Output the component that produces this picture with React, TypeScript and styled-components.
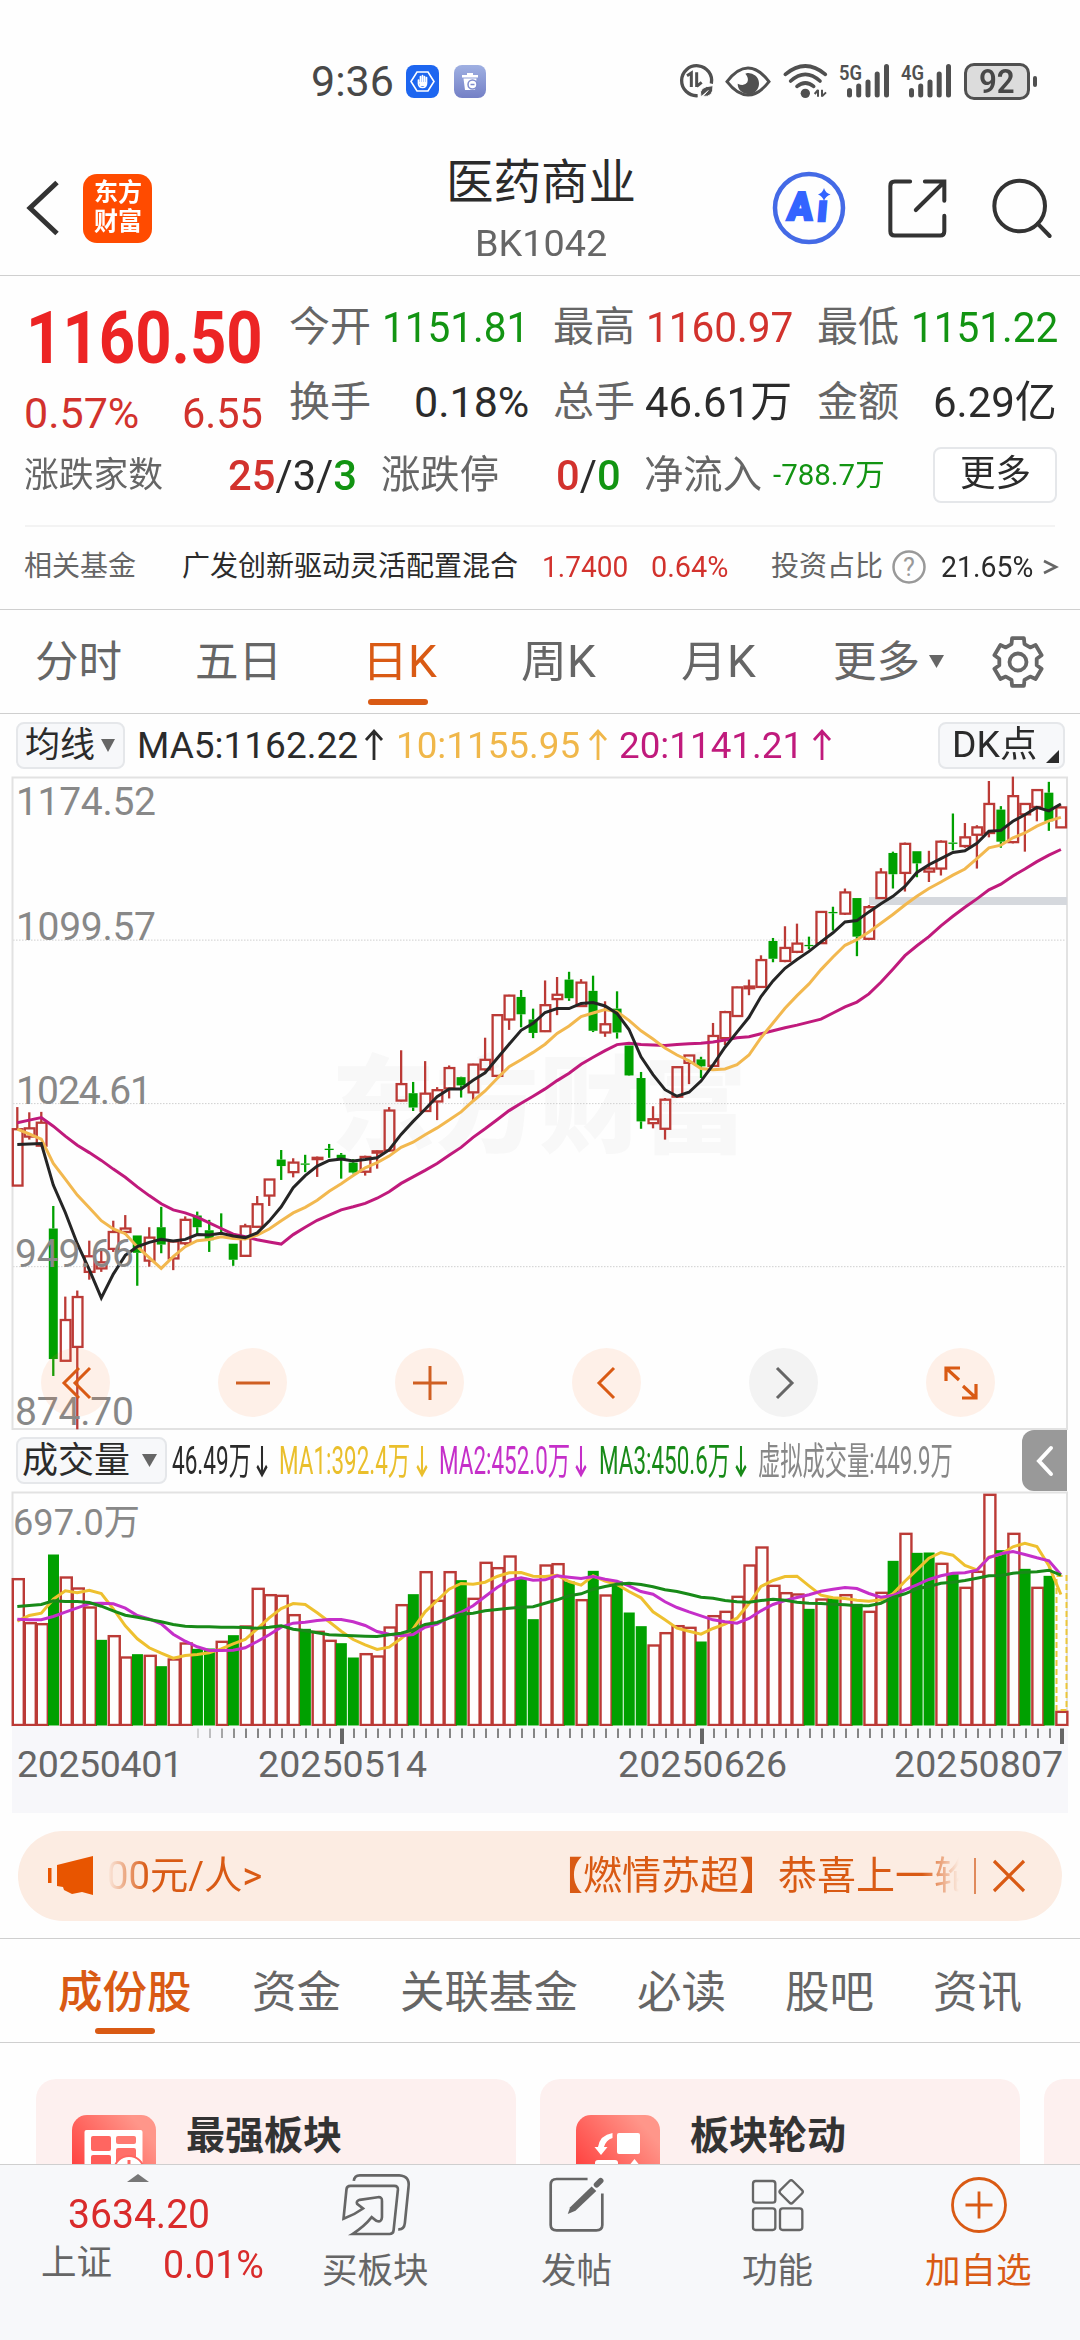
import React, { useLayoutEffect, useRef, useState } from "react";
import styled, { createGlobalStyle } from "styled-components";

const FONT = `Roboto, "Noto Sans CJK SC", sans-serif`;
const INK = "#2b2b2b";
const GREY = "#666666";
const RED = "#d2322d";
const GREEN = "#129412";
const ORANGE = "#d95a14";

const Global = createGlobalStyle`
  * { box-sizing: border-box; }
  body { margin: 0; background: #fefefe; font-family: ${FONT}; overflow-x: hidden; }
  svg { display: block; flex: none; overflow: visible; }
`;

/* ---------- text fitted to a fixed measure ---------- */
const FitBox = styled.span<{ $w: number; $ml: number; $size: number; $c: string; $weight: number; $dy: number }>`
  display: block;
  flex: none;
  width: ${(p) => p.$w}px;
  margin-left: ${(p) => p.$ml}px;
  margin-top: ${(p) => p.$dy}px;
  height: ${(p) => p.$size}px;
  font-size: ${(p) => p.$size}px;
  line-height: ${(p) => p.$size}px;
  color: ${(p) => p.$c};
  font-weight: ${(p) => p.$weight};
  white-space: nowrap;
`;
const FitInner = styled.span`
  display: inline-block;
  transform-origin: 0 50%;
`;
type TProps = { w: number; size: number; c?: string; weight?: number; ml?: number; dy?: number; children: React.ReactNode };
function T({ w, size, c = INK, weight = 400, ml = 0, dy = 0, children }: TProps) {
  const ref = useRef<HTMLSpanElement>(null);
  const [k, setK] = useState(1);
  useLayoutEffect(() => {
    if (ref.current) setK(w / ref.current.offsetWidth);
  }, [w, size]);
  return (
    <FitBox $w={w} $ml={ml} $size={size} $c={c} $weight={weight} $dy={dy}>
      <FitInner ref={ref} style={{ transform: `scaleX(${k})` }}>{children}</FitInner>
    </FitBox>
  );
}
const Tint = styled.span<{ $c: string; $weight?: number }>`
  color: ${(p) => p.$c};
  font-weight: ${(p) => p.$weight ?? 400};
`;

/* ---------- layout parts ---------- */
const Page = styled.div`
  width: 1080px;
  height: 2340px;
  display: flex;
  flex-direction: column;
  overflow: hidden;
  background: #fefefe;
`;
const Row = styled.div<{ $h: number; $pl?: number; $mt?: number }>`
  display: flex;
  flex: none;
  align-items: center;
  height: ${(p) => p.$h}px;
  padding-left: ${(p) => p.$pl ?? 0}px;
  margin-top: ${(p) => p.$mt ?? 0}px;
`;
const Divider = styled.div`
  flex: none;
  height: 1px;
  background: #cfcfcf;
`;
const StatusBar = styled(Row)`
  padding-top: 21px;
`;
const Battery = styled.div`
  width: 66px;
  height: 37px;
  margin-left: 12px;
  border: 3px solid #505050;
  border-radius: 10px;
  background: #dcdcdc;
  display: flex;
  align-items: center;
  justify-content: center;
`;
const BatteryTip = styled.div`
  width: 4px;
  height: 11px;
  margin-left: 3px;
  border-radius: 2px;
  background: #505050;
`;
const Header = styled.header`
  display: flex;
  flex: none;
  align-items: center;
  height: 134px;
  padding-left: 26px;
`;
const Logo = styled.div`
  display: flex;
  flex-direction: column;
  align-items: center;
  justify-content: center;
  gap: 4px;
  width: 69px;
  height: 69px;
  margin-left: 23px;
  border-radius: 14px;
  background: #ff4b00;
`;
const TitleBlock = styled.div`
  display: flex;
  flex-direction: column;
  align-items: center;
  width: 190px;
  height: 134px;
  margin-left: 294px;
  padding-top: 19px;
`;
const Quote = styled.section`
  position: relative;
  flex: none;
  height: 333px;
  display: flex;
  flex-direction: column;
`;
const QuoteTop = styled.div`
  display: flex;
  height: 168px;
`;
const PriceBlock = styled.div`
  width: 289px;
  padding: 27px 0 0 24px;
`;
const Stats = styled.div`
  padding-top: 13px;
`;
const Pill = styled.div<{ $w: number; $h: number; $ml: number; $bg: string; $r?: number }>`
  display: flex;
  flex: none;
  align-items: center;
  width: ${(p) => p.$w}px;
  height: ${(p) => p.$h}px;
  margin-left: ${(p) => p.$ml}px;
  background: ${(p) => p.$bg};
  border: 2px solid #e5e7ea;
  border-radius: ${(p) => p.$r ?? 8}px;
`;
const SoftRule = styled.div`
  height: 2px;
  margin: 20px 25px 0;
  background: #f3f3f3;
`;
const Tab = styled.div<{ $ml: number; $w: number }>`
  position: relative;
  flex: none;
  width: ${(p) => p.$w}px;
  margin-left: ${(p) => p.$ml}px;
  height: 100%;
  display: flex;
  align-items: center;
`;
const Underline = styled.i<{ $left: number }>`
  position: absolute;
  bottom: 8px;
  left: ${(p) => p.$left}px;
  width: 60px;
  height: 6px;
  border-radius: 3px;
  background: ${ORANGE};
`;
const ChartArea = styled.section`
  position: relative;
  flex: none;
  height: 654px;
`;
const Controls = styled.div`
  position: absolute;
  left: 41px;
  top: 572px;
  display: flex;
  gap: 108px;
`;
const RoundButton = styled.div<{ $muted?: boolean }>`
  display: flex;
  align-items: center;
  justify-content: center;
  width: 69px;
  height: 69px;
  border-radius: 50%;
  background: ${(p) => (p.$muted ? "#f3f3f3" : "rgba(255, 125, 55, 0.11)")};
`;
const SideTab = styled.div`
  display: flex;
  align-items: center;
  justify-content: center;
  width: 45px;
  height: 61px;
  margin-left: 69px;
  border-radius: 12px 0 0 12px;
  background: #999;
`;
const Axis = styled.div`
  flex: none;
  height: 87px;
  margin: 0 12px;
  background: #f7f7fa;
`;
const Banner = styled.div`
  display: flex;
  flex: none;
  align-items: center;
  width: 1044px;
  height: 90px;
  margin: 18px 0 17px 18px;
  padding-left: 30px;
  border-radius: 45px;
  background: #fcece2;
`;
const Ticker = styled.div`
  display: flex;
  align-items: center;
  width: 852px;
  height: 60px;
  margin-left: 13px;
  overflow: hidden;
  -webkit-mask-image: linear-gradient(90deg, transparent 0, #000 40px, #000 815px, transparent 852px);
  mask-image: linear-gradient(90deg, transparent 0, #000 40px, #000 815px, transparent 852px);
`;
const TickerRule = styled.div`
  width: 2px;
  height: 36px;
  margin-left: 15px;
  background: #e08a5c;
`;
const Cards = styled.div`
  display: flex;
  flex: none;
  gap: 24px;
  height: 121px;
  padding: 36px 0 0 36px;
  overflow: hidden;
`;
const Card = styled.div`
  display: flex;
  flex: none;
  width: 480px;
  height: 200px;
  padding: 36px;
  border-radius: 20px;
  background: #fdf0ef;
`;
const BottomBar = styled.nav`
  display: flex;
  flex: none;
  height: 176px;
  border-top: 1px solid #cfcfcf;
  background: #f7f8fa;
`;
const IndexBlock = styled.div`
  width: 275px;
  padding-top: 9px;
`;
const NavItem = styled.div`
  display: flex;
  flex-direction: column;
  align-items: center;
  width: 201px;
`;
const NavIcon = styled.div`
  display: flex;
  align-items: center;
  height: 79px;
`;

/* ---------- chart data, levels measured downwards from the plot top ---------- */
type Candle = [number, number, number, number, 0 | 1];
const candles: Candle[] = [
  [800,851,981,981,1],[812,849,868,875,1],[811,836,889,889,1],[1028,1080,1381,1420,0],[1237,1291,1385,1385,1],[1223,1238,1353,1543,1],
  [1108,1144,1180,1198,1],[1125,1158,1172,1180,1],[1062,1088,1127,1134,1],[1049,1080,1088,1095,1],[1096,1096,1136,1212,0],[1077,1101,1154,1168,1],
  [1030,1077,1117,1137,0],[1110,1110,1149,1176,1],[1052,1060,1114,1118,1],[1041,1050,1077,1094,0],[1060,1084,1107,1134,0],[1045,1091,1094,1094,0],
  [1115,1115,1152,1166,0],[1069,1075,1143,1145,1],[1005,1024,1076,1078,1],[966,967,1004,1028,1],[899,921,936,968,0],[918,928,950,962,1],
  [910,930,933,950,0],[914,917,920,961,1],[885,896,899,917,0],[906,910,920,965,0],[920,928,951,953,0],[912,915,949,958,1],
  [900,902,905,942,1],[800,808,900,903,1],[669,747,785,787,1],[742,768,801,809,0],[694,769,809,811,1],[754,761,787,830,1],
  [704,710,757,780,1],[730,731,750,778,0],[700,702,766,786,1],[640,691,713,716,1],[587,588,728,730,1],[541,543,598,622,1],
  [530,546,586,616,0],[573,598,629,641,0],[508,565,625,627,1],[500,541,551,588,1],[488,506,549,555,0],[505,513,567,568,1],
  [497,532,624,627,0],[556,609,628,638,1],[533,573,628,642,0],[658,658,727,728,0],[719,733,833,850,0],[798,828,837,849,1],
  [779,783,850,875,1],[706,708,776,778,1],[680,681,698,747,1],[684,690,706,733,0],[606,636,705,706,1],[578,581,641,657,1],
  [522,524,590,592,1],[506,522,526,542,1],[450,461,523,525,1],[410,417,458,466,0],[383,433,463,466,1],[377,423,442,445,1],
  [407,426,429,436,0],[348,350,422,424,1],[338,350,353,393,0],[296,305,354,357,1],[318,318,407,452,0],[334,339,412,415,1],
  [249,259,318,320,1],[211,214,263,296,0],[190,193,260,303,1],[210,210,238,270,0],[209,250,257,281,1],[185,188,250,266,1],
  [123,190,193,208,0],[145,178,198,202,1],[150,155,172,250,1],[48,101,168,178,1],[106,114,188,202,0],[38,83,189,192,1],
  [100,101,125,211,1],[67,69,108,141,1],[50,75,141,163,0],[107,109,155,156,1],
];
const ma5 = [886,885,884,980,1043,1115,1175,1240,1185,1142,1122,1112,1105,1109,1105,1094,1095,1091,1097,1101,1090,1063,1030,986,958,936,923,920,924,921,917,899,863,833,805,776,758,758,738,721,688,655,623,607,582,573,573,561,559,567,584,621,684,725,760,775,766,740,703,662,627,593,545,509,480,460,441,419,398,373,370,350,331,314,291,259,241,227,213,209,192,164,162,141,126,109,117,101];
const ma10 = [851,862,874,930,966,1003,1032,1062,1081,1092,1122,1147,1172,1145,1122,1108,1105,1099,1103,1104,1095,1081,1062,1044,1031,1015,994,977,958,940,928,913,893,881,864,848,830,811,786,763,734,707,691,674,655,630,613,591,583,575,580,600,624,643,664,680,693,711,714,712,702,680,640,606,572,543,516,483,454,427,414,396,376,356,334,314,296,281,265,251,227,202,196,179,168,152,140,132];
const ma20 = [836,830,824,844,867,888,905,923,943,962,984,1004,1023,1037,1044,1054,1067,1080,1093,1099,1106,1111,1116,1094,1077,1061,1049,1037,1030,1022,1010,995,976,961,946,930,911,893,870,850,829,808,791,775,758,739,722,701,685,670,656,653,656,657,658,656,654,653,650,645,640,638,631,624,617,611,604,597,583,569,558,539,512,482,451,428,407,382,360,339,320,299,286,267,251,234,219,206];

const volumes = [475,607,610,404,470,503,560,660,646,710,703,705,739,716,668,687,686,663,646,617,504,523,525,583,627,633,660,670,713,700,707,620,553,523,454,540,454,481,534,426,442,407,474,598,434,430,485,538,453,524,485,578,619,674,637,616,621,665,586,573,528,434,380,495,517,521,567,536,536,523,552,573,516,423,339,399,398,429,463,501,453,222,391,339,447,501,468,873];
const volumeDown = new Set([3,7,10,12,15,16,18,24,27,28,33,37,42,43,46,48,50,51,52,57,66,68,70,73,75,76,78,82,84,86]);
const vma1 = [604,587,580,538,513,519,511,521,567,618,657,684,700,715,707,704,699,687,672,659,627,594,566,551,554,579,606,634,659,675,689,682,656,627,576,542,508,491,493,487,470,459,458,469,470,466,485,496,468,484,494,515,534,576,600,625,634,643,626,613,595,551,500,482,470,469,498,526,534,536,541,544,540,522,484,450,415,398,406,437,450,412,403,381,370,380,438,524];
const vma2 = [598,600,600,590,577,564,551,550,552,565,587,597,612,643,664,681,692,692,691,684,665,645,622,610,607,602,599,599,606,617,635,643,648,644,622,613,593,577,558,530,503,481,474,481,480,468,472,476,470,478,484,498,515,523,546,563,576,588,600,606,610,596,573,554,542,533,525,514,508,503,506,521,532,527,510,495,479,468,460,459,451,413,402,395,404,414,423,465];
const vma3 = [560,557,554,543,545,545,548,559,573,586,592,599,606,614,619,621,621,622,622,623,625,622,618,628,633,639,645,646,648,649,650,645,640,630,614,608,595,583,580,573,569,565,562,561,550,540,528,522,508,500,493,490,494,501,510,515,523,532,535,542,546,547,542,538,541,547,550,551,553,555,558,558,550,533,522,507,500,490,487,482,475,468,467,460,457,456,451,466];

const cx = (i: number) => 17.3 + i * 11.995;
const py = (v: number) => 1.5 + (v - 40) / 2.3059;
const vy = (v: number) => 1.5 + (v - 218) / 3;
const line = (d: number[], y: (v: number) => number) => d.map((v, i) => `${cx(i).toFixed(1)},${y(v).toFixed(1)}`).join(" ");
const CR = "#bb3a36";
const CG = "#00a000";

const Label = styled.text`
  font-family: ${FONT};
  font-size: 39px;
  fill: #888;
`;
const Watermark = styled.text`
  font-family: "Noto Sans CJK SC", sans-serif;
  font-size: 106px;
  font-weight: 900;
  fill: #f8f8f8;
`;

function PriceChart() {
  return (
    <svg width="1080" height="654">
      <Watermark x="331" y="368" textLength="416" lengthAdjust="spacingAndGlyphs">东方财富</Watermark>
      {[415, 792, 1168].map((v) => (
        <line key={v} x1="13" x2="1067" y1={py(v)} y2={py(v)} stroke="#cfcfcf" strokeWidth="1" strokeDasharray="1.5 1.5" />
      ))}
      <path d="M12.5 653V1.5H1067V653Z" fill="none" stroke="#e2e2e2" strokeWidth="2" />
      <rect x="869" y="121" width="198" height="8" fill="#d5d8dd" />
      {candles.map(([wt, bt, bb, wb, up], i) => {
        const x = cx(i);
        const c = up ? CR : CG;
        return (
          <g key={i} stroke={c} strokeWidth="2.3">
            <line x1={x} x2={x} y1={py(wt)} y2={py(bt)} />
            <line x1={x} x2={x} y1={py(bb)} y2={py(wb)} />
            {up ? (
              <rect x={x - 4.5} y={py(bt)} width="9.7" height={Math.max(py(bb) - py(bt), 0.5)} fill="none" />
            ) : (
              <rect x={x - 4.5} y={py(bt)} width="9" height={Math.max(py(bb) - py(bt), 0.5)} stroke="none" fill={c} />
            )}
          </g>
        );
      })}
      <polyline points={line(ma20, py)} fill="none" stroke="#c01a7c" strokeWidth="3" />
      <polyline points={line(ma10, py)} fill="none" stroke="#f2b84f" strokeWidth="3" />
      <polyline points={line(ma5, py)} fill="none" stroke="#252525" strokeWidth="3" />
      <Label x="16" y="39" textLength="140">1174.52</Label>
      <Label x="16" y="163.5" textLength="140">1099.57</Label>
      <Label x="16" y="327.5" textLength="136">1024.61</Label>
      <Label x="15" y="490.5" textLength="119">949.66</Label>
      <Label x="15" y="649" textLength="119">874.70</Label>
    </svg>
  );
}

function VolumeChart() {
  return (
    <svg width="1080" height="235">
      <path d="M12.5 235V1.5H1067V235" fill="none" stroke="#e2e2e2" strokeWidth="2" />
      {volumes.map((v, i) =>
        volumeDown.has(i) ? (
          <rect key={i} x={cx(i) - 5.3} y={vy(v)} width="11" height={234.5 - vy(v)} fill={CG} />
        ) : (
          <rect key={i} x={cx(i) - 4.5} y={vy(v) + 1} width="11" height={233 - vy(v)} fill="none" stroke={CR} strokeWidth="2.4" />
        ),
      )}
      <rect x="1056.5" y="85" width="10" height="134" fill="none" stroke="#ecc63a" strokeWidth="2" strokeDasharray="6 3" />
      <polyline points={line(vma1, vy)} fill="none" stroke="#eec02f" strokeWidth="3" />
      <polyline points={line(vma2, vy)} fill="none" stroke="#c52fc9" strokeWidth="3" />
      <polyline points={line(vma3, vy)} fill="none" stroke="#188a18" strokeWidth="3" />
      <Label x="13" y="44" textLength="127" lengthAdjust="spacingAndGlyphs" style={{ fontSize: 36 }}>697.0万</Label>
    </svg>
  );
}

const DateLabel = styled.text`
  font-family: ${FONT};
  font-size: 37.5px;
  fill: #666;
`;
function DateAxis() {
  const ticks = Array.from({ length: 73 }, (_, k) => k);
  return (
    <Axis>
      <svg width="1056" height="87" viewBox="12 0 1056 87">
        {ticks.map((k) => {
          const major = k === 12 || k === 42 || k === 72;
          return (
            <line key={k} x1={198 + 12 * k} x2={198 + 12 * k} y1="2.5" y2={major ? 18 : 12} stroke={major ? "#666" : "#858585"} strokeWidth={major ? 4 : 2} opacity={Math.min(1, 0.3 + k * 0.2)} />
          );
        })}
        <DateLabel x="17" y="51" textLength="166">20250401</DateLabel>
        <DateLabel x="258" y="51" textLength="169">20250514</DateLabel>
        <DateLabel x="618" y="51" textLength="169">20250626</DateLabel>
        <DateLabel x="894" y="51" textLength="169">20250807</DateLabel>
      </svg>
    </Axis>
  );
}

/* ---------- small icons ---------- */
const Arrow = ({ c, ml = 8, down, w = 20 }: { c: string; ml?: number; down?: boolean; w?: number }) => (
  <svg width={w} height="32" viewBox="0 0 20 32" preserveAspectRatio="none" style={{ marginLeft: ml }}>
    <path d={down ? "M10 1V30M2 21L10 30L18 21" : "M10 31V2M2 11L10 2L18 11"} fill="none" stroke={c} strokeWidth={down ? 3.4 : 2.8} />
  </svg>
);
const Caret = ({ ml, w = 14, h = 13 }: { ml: number; w?: number; h?: number }) => (
  <svg width={w} height={h} viewBox="0 0 10 10" preserveAspectRatio="none" style={{ marginLeft: ml }}>
    <path d="M0 0H10L5 10Z" fill="#666" />
  </svg>
);
const SignalIcon = ({ label, ml }: { label: string; ml: number }) => (
  <svg width="51" height="36" viewBox="0 0 51 36" style={{ marginLeft: ml }}>
    <text x="0" y="17" fontFamily="Roboto, sans-serif" fontSize="21" fontWeight="600" fill="#505050" textLength="23" lengthAdjust="spacingAndGlyphs">{label}</text>
    {[[10.5, 27.5], [19.7, 23], [29, 19], [38.2, 11], [47.5, 3.5]].map(([x, y]) => (
      <line key={x} x1={x} x2={x} y1={y} y2="32" stroke="#505050" strokeWidth="5" strokeLinecap="round" />
    ))}
  </svg>
);
function gearPath() {
  const pts: string[] = [];
  const at = (r: number, deg: number) => `${(26 + r * Math.cos((deg * Math.PI) / 180)).toFixed(1)} ${(26 + r * Math.sin((deg * Math.PI) / 180)).toFixed(1)}`;
  for (let k = 0; k < 6; k++) {
    const a = -90 + 60 * k;
    pts.push(at(19, a - 20), at(24.5, a - 14), at(24.5, a + 14), at(19, a + 20));
  }
  return `M${pts.join("L")}Z`;
}

export default function App() {
  return (
    <>
      <Global />
      <Page>
        <StatusBar $h={141} $pl={311}>
          <Row $h={60}>
            <T w={83} size={43} c="#484848" dy={1}>9:36</T>
            <svg width="33" height="33" viewBox="0 0 33 33" style={{ marginLeft: 12 }}>
              <rect width="33" height="33" rx="8" fill="#1d66f0" />
              <path d="M11 7H22L28 16.5L22 26H11L5 16.5Z" fill="none" stroke="#fff" strokeWidth="1.6" />
              <path d="M12.5 15V19Q13 22.5 16.5 22.5Q20.5 22.5 20.5 18V12.5M14.5 18V11.5M16.5 17V10.5M18.5 17V11.5" fill="none" stroke="#fff" strokeWidth="1.7" strokeLinecap="round" />
              <path d="M13 17H20V21H14Z" fill="#fff" />
            </svg>
            <svg width="32" height="33" viewBox="0 0 32 33" style={{ marginLeft: 15 }}>
              <defs><linearGradient id="bin" x1="0" y1="0" x2="0" y2="1"><stop offset="0" stopColor="#9fb0e2" /><stop offset="1" stopColor="#7480c6" /></linearGradient></defs>
              <rect width="32" height="33" rx="8" fill="url(#bin)" />
              <path d="M8 10H24V12.5H8ZM13 8H19V10H13ZM9.5 13.5H22.5L21 25H11Z" fill="#fff" />
              <circle cx="18.5" cy="19.5" r="4.5" fill="#fff" stroke="#7f8ccd" strokeWidth="1.5" />
              <path d="M16.5 19.5H20.5" stroke="#7f8ccd" strokeWidth="1.5" />
            </svg>
            <svg width="35" height="36" viewBox="56 38 105 108" style={{ marginLeft: 193 }}>
              <path d="M153 100A45 45 0 1 0 112 136" fill="none" stroke="#505050" strokeWidth="10" />
              <path d="M80 76L93 68V110M109 66V110M109 108L124 96" fill="none" stroke="#505050" strokeWidth="9" />
              <path d="M122 138Q112 108 158 106Q160 142 128 138L144 120" fill="#505050" stroke="#fff" strokeWidth="3" />
            </svg>
            <svg width="46" height="33" viewBox="195 42 138 99" style={{ marginLeft: 11 }}>
              <path d="M201 92Q232 51 264 51Q296 51 327 92Q296 132 264 132Q232 132 201 92Z" fill="none" stroke="#505050" strokeWidth="9" />
              <path d="M262 66A32 32 0 1 1 233 98Q252 108 262 94Q268 82 256 68Z" fill="#505050" />
            </svg>
            <svg width="45" height="36" viewBox="368 38 135 108" style={{ marginLeft: 12 }}>
              <g fill="none" stroke="#505050" strokeWidth="11" strokeLinecap="round">
                <path d="M375 72Q435 22 495 72" /><path d="M391 92Q435 52 479 92" /><path d="M410 108Q435 88 460 108" />
              </g>
              <circle cx="435" cy="129" r="14" fill="#505050" />
              <path d="M473 118V139M463 131L473 119M485 118V139M497 126L485 138" fill="none" stroke="#505050" strokeWidth="6" />
            </svg>
            <SignalIcon label="5G" ml={11} />
            <SignalIcon label="4G" ml={11} />
            <Battery><T w={36} size={33} c="#484848" weight={600}>92</T></Battery>
            <BatteryTip />
          </Row>
        </StatusBar>

        <Header>
          <svg width="34" height="56" viewBox="0 0 34 56"><path d="M31 2.5L4 28L31 53.5" fill="none" stroke="#333" strokeWidth="5" /></svg>
          <Logo>
            <T w={48} size={25} c="#fff" weight={700} dy={-2}>东方</T>
            <T w={48} size={25} c="#fff" weight={700}>财富</T>
          </Logo>
          <TitleBlock>
            <T w={190} size={47.5}>医药商业</T>
            <T w={132} size={37.5} c={GREY} dy={17}>BK1042</T>
          </TitleBlock>
          <svg width="74" height="74" viewBox="0 0 74 74" style={{ marginLeft: 136 }}>
            <circle cx="37" cy="37" r="34" fill="none" stroke="#446ae6" strokeWidth="4.5" />
            <g transform="skewX(-5)" fill="#3364ff" stroke="#3364ff" strokeWidth="2.5" fontFamily="Roboto, sans-serif" fontWeight="900">
              <text x="19" y="49.5" fontSize="39" textLength="25" lengthAdjust="spacingAndGlyphs">A</text>
              <text x="49" y="50" fontSize="37" textLength="10" lengthAdjust="spacingAndGlyphs">ı</text>
            </g>
            <path d="M52 17Q53.5 22 58.5 23.5Q53.5 25 52 30Q50.5 25 46 23.5Q50.5 22 52 17Z" fill="#3364ff" />
          </svg>
          <svg width="59" height="60" viewBox="682 385 176 178" style={{ marginLeft: 42 }}>
            <g fill="none" stroke="#333" strokeWidth="12" strokeLinecap="round">
              <path d="M748 395H702Q689 395 689 408V543Q689 556 702 556H838Q850 556 850 543V497" />
              <path d="M792 395H850V452M765 480L848 398" />
            </g>
          </svg>
          <svg width="62" height="62" viewBox="990 380 186 186" style={{ marginLeft: 44 }}>
            <circle cx="1076" cy="467" r="76" fill="none" stroke="#333" strokeWidth="12" />
            <path d="M1130 520L1166 557" stroke="#333" strokeWidth="12" strokeLinecap="round" />
          </svg>
        </Header>
        <Divider />

        <Quote>
          <QuoteTop>
            <PriceBlock>
              <T w={237} size={72} c="#ec2424" weight={700} ml={2}>1160.50</T>
              <Row $h={44} $mt={16}>
                <T w={115} size={43} c={RED}>0.57%</T>
                <T w={81} size={43} c={RED} ml={43}>6.55</T>
              </Row>
            </PriceBlock>
            <Stats>
              <Row $h={76}>
                <T w={82} size={41} c={GREY}>今开</T><T w={147} size={43} c={GREEN} ml={11}>1151.81</T>
                <T w={82} size={41} c={GREY} ml={24}>最高</T><T w={147} size={43} c={RED} ml={11}>1160.97</T>
                <T w={82} size={41} c={GREY} ml={24}>最低</T><T w={147} size={43} c={GREEN} ml={12}>1151.22</T>
              </Row>
              <Row $h={74}>
                <T w={82} size={41} c={GREY}>换手</T><T w={115} size={43} ml={43}>0.18%</T>
                <T w={82} size={41} c={GREY} ml={24}>总手</T><T w={147} size={43} ml={10}>46.61万</T>
                <T w={82} size={41} c={GREY} ml={25}>金额</T><T w={124} size={43} ml={34}>6.29亿</T>
              </Row>
            </Stats>
          </QuoteTop>
          <Row $h={60} $mt={1} $pl={24}>
            <T w={139} size={35} c={GREY}>涨跌家数</T>
            <T w={129} size={43} ml={65}><Tint $c={RED} $weight={500}>25</Tint>/3/<Tint $c={GREEN} $weight={500}>3</Tint></T>
            <T w={118} size={39} c={GREY} ml={24}>涨跌停</T>
            <T w={65} size={43} ml={57}><Tint $c={RED} $weight={500}>0</Tint>/<Tint $c={GREEN} $weight={500}>0</Tint></T>
            <T w={118} size={39} c={GREY} ml={23}>净流入</T>
            <T w={112} size={30} c={GREEN} ml={11}>-788.7万</T>
            <Pill $w={124} $h={56} $ml={48} $bg="#fff"><T w={71} size={36} ml={25} dy={-2}>更多</T></Pill>
          </Row>
          <SoftRule />
          <Row $h={80} $pl={24}>
            <T w={112} size={28} c={GREY}>相关基金</T>
            <T w={336} size={28} ml={46}>广发创新驱动灵活配置混合</T>
            <T w={86} size={30} c={RED} ml={24}>1.7400</T>
            <T w={77} size={30} c={RED} ml={23}>0.64%</T>
            <T w={112} size={28} c={GREY} ml={43}>投资占比</T>
            <svg width="34" height="34" viewBox="0 0 34 34" style={{ marginLeft: 9 }}>
              <circle cx="17" cy="17" r="15.5" fill="none" stroke="#999" strokeWidth="2.5" />
              <text x="17" y="26" textAnchor="middle" fontFamily="Roboto, sans-serif" fontSize="25" fill="#999">?</text>
            </svg>
            <T w={92} size={30} ml={15}>21.65%</T>
            <svg width="15" height="16" viewBox="0 0 15 16" style={{ marginLeft: 10 }}><path d="M1 2L13 8L1 14" fill="none" stroke="#666" strokeWidth="2.6" /></svg>
          </Row>
        </Quote>
        <Divider />

        <Row $h={103}>
          <Tab $ml={35} $w={87}><T w={87} size={43.5} c={GREY} dy={3}>分时</T></Tab>
          <Tab $ml={73} $w={87}><T w={87} size={43.5} c={GREY} dy={3}>五日</T></Tab>
          <Tab $ml={80} $w={75}><T w={75} size={43.5} c={ORANGE} dy={3}>日K</T><Underline $left={6} /></Tab>
          <Tab $ml={84} $w={75}><T w={75} size={43.5} c={GREY} dy={3}>周K</T></Tab>
          <Tab $ml={85} $w={75}><T w={75} size={43.5} c={GREY} dy={3}>月K</T></Tab>
          <Tab $ml={77} $w={87}><T w={87} size={43.5} c={GREY} dy={3}>更多</T></Tab>
          <Caret ml={9} w={15} />
          <svg width="52" height="52" viewBox="0 0 52 52" style={{ marginLeft: 48 }}>
            <path d={gearPath()} fill="none" stroke="#666" strokeWidth="3.8" strokeLinejoin="round" />
            <circle cx="26" cy="26" r="8.5" fill="none" stroke="#666" strokeWidth="3.8" />
          </svg>
        </Row>
        <Divider />

        <Row $h={62}>
          <Pill $w={109} $h={47} $ml={16} $bg="#f7f8fa"><T w={70} size={35} ml={7}>均线</T><Caret ml={6} /></Pill>
          <T w={221} size={37} ml={12}>MA5:1162.22</T><Arrow c={INK} ml={6} />
          <T w={184} size={37} c="#f0b74a" ml={12}>10:1155.95</T><Arrow c="#f0b74a" />
          <T w={184} size={37} c="#c01a7c" ml={11}>20:1141.21</T><Arrow c="#c01a7c" ml={9} />
          <Pill $w={127} $h={47} $ml={106} $bg="#f7f8fa">
            <T w={85} size={36} ml={12}>DK点</T>
            <svg width="13" height="13" viewBox="0 0 13 13" style={{ marginLeft: 9, marginTop: 22 }}><path d="M13 0V13H0Z" fill="#2b2b2b" /></svg>
          </Pill>
        </Row>

        <ChartArea>
          <PriceChart />
          <Controls>
            <RoundButton><svg width="32" height="34" viewBox="0 0 32 34"><path d="M19 2L4 17L19 32M30 2L15 17L30 32" fill="none" stroke={ORANGE} strokeWidth="3" /></svg></RoundButton>
            <RoundButton><svg width="34" height="34" viewBox="0 0 34 34"><path d="M0 17H34" stroke="#cf5f22" strokeWidth="3" /></svg></RoundButton>
            <RoundButton><svg width="34" height="34" viewBox="0 0 34 34"><path d="M0 17H34M17 0V34" stroke="#cf5f22" strokeWidth="3" /></svg></RoundButton>
            <RoundButton><svg width="22" height="34" viewBox="0 0 22 34"><path d="M18 2L3 17L18 32" fill="none" stroke={ORANGE} strokeWidth="3" /></svg></RoundButton>
            <RoundButton $muted><svg width="22" height="34" viewBox="0 0 22 34"><path d="M4 2L19 17L4 32" fill="none" stroke="#666" strokeWidth="3" /></svg></RoundButton>
            <RoundButton><svg width="34" height="34" viewBox="0 0 34 34"><path d="M2 15V2H16M2 2L15 14M32 18V32H18M32 32L19 20" fill="none" stroke={ORANGE} strokeWidth="3.2" /></svg></RoundButton>
          </Controls>
        </ChartArea>

        <Row $h={61}>
          <Pill $w={151} $h={47} $ml={16} $bg="#f7f8fa"><T w={108} size={36} ml={4}>成交量</T><Caret ml={12} w={15} /></Pill>
          <T w={79} size={38} ml={5}>46.49万</T><Arrow c={INK} down ml={5} w={12} />
          <T w={131} size={38} c="#eabf2c" ml={11}>MA1:392.4万</T><Arrow c="#eabf2c" down ml={6} w={12} />
          <T w={131} size={38} c="#c52fc9" ml={11}>MA2:452.0万</T><Arrow c="#c52fc9" down ml={5} w={12} />
          <T w={131} size={38} c="#188a18" ml={12}>MA3:450.6万</T><Arrow c="#188a18" down ml={5} w={12} />
          <T w={195} size={38} c="#888" ml={11}>虚拟成交量:449.9万</T>
          <SideTab><svg width="18" height="30" viewBox="0 0 18 30"><path d="M15 2L3 15L15 28" fill="none" stroke="#fff" strokeWidth="4" strokeLinecap="round" /></svg></SideTab>
        </Row>
        <VolumeChart />
        <DateAxis />

        <Banner>
          <svg width="46" height="40" viewBox="0 0 46 40"><path d="M0 12H3.5V27H0ZM9 9L45 0V39L34 36L24 38L16 34L15 31L9 30Z" fill="#e85500" /></svg>
          <Ticker>
            <T w={155} size={39} c={ORANGE}>00元/人&gt;</T>
            <T w={429} size={39} c={ORANGE} ml={282}>【燃情苏超】恭喜上一轮</T>
          </Ticker>
          <TickerRule />
          <svg width="34" height="34" viewBox="0 0 34 34" style={{ marginLeft: 16 }}><path d="M2 2L32 32M32 2L2 32" stroke={ORANGE} strokeWidth="3.2" /></svg>
        </Banner>
        <Divider />
        <Row $h={103}>
          <Tab $ml={58} $w={134}><T w={134} size={44.5} c={ORANGE} weight={500} dy={5}>成份股</T><Underline $left={37} /></Tab>
          <Tab $ml={60} $w={89}><T w={89} size={44.5} c={GREY} dy={5}>资金</T></Tab>
          <Tab $ml={59} $w={178}><T w={178} size={44.5} c={GREY} dy={5}>关联基金</T></Tab>
          <Tab $ml={59} $w={89}><T w={89} size={44.5} c={GREY} dy={5}>必读</T></Tab>
          <Tab $ml={59} $w={89}><T w={89} size={44.5} c={GREY} dy={5}>股吧</T></Tab>
          <Tab $ml={59} $w={89}><T w={89} size={44.5} c={GREY} dy={5}>资讯</T></Tab>
        </Row>
        <Divider />

        <Cards>
          <Card>
            <svg width="84" height="84" viewBox="0 0 84 84">
              <defs><linearGradient id="warm" x1="0" y1="0.6" x2="0.7" y2="0"><stop offset="0" stopColor="#ff4240" /><stop offset="1" stopColor="#ff968a" /></linearGradient></defs>
              <rect width="84" height="84" rx="15" fill="url(#warm)" />
              <rect x="12.5" y="15" width="58" height="56" rx="2" fill="#fff" />
              <rect x="19" y="21" width="20" height="15" rx="2" fill="#ff6661" /><rect x="44" y="21" width="20" height="8" rx="2" fill="#ff7a72" />
              <rect x="19" y="40" width="20" height="16" rx="2" fill="#ff5c58" /><rect x="44" y="33" width="20" height="20" rx="2" fill="#ff6f69" />
              <circle cx="57" cy="56" r="15" fill="#fff" stroke="#ff6661" strokeWidth="2" /><path d="M57 45V60" stroke="#ff6661" strokeWidth="3" />
            </svg>
            <T w={156} size={39} weight={700} ml={30} c="#333" dy={2}>最强板块</T>
          </Card>
          <Card>
            <svg width="84" height="84" viewBox="0 0 84 84">
              <rect width="84" height="84" rx="15" fill="url(#warm)" />
              <rect x="41" y="18" width="23" height="21" rx="2" fill="#fff" />
              <path d="M36.5 18V23Q30 25 28 32H31.5L25 40L18.5 32H22Q24 20 36.5 18Z" fill="#fff" />
              <rect x="19" y="45" width="23" height="21" rx="3" fill="#fff" /><path d="M58.5 44L65 52H52Z" fill="#fff" />
            </svg>
            <T w={156} size={39} weight={700} ml={30} c="#333" dy={2}>板块轮动</T>
          </Card>
          <Card />
        </Cards>

        <BottomBar>
          <IndexBlock>
            <svg width="22" height="8" viewBox="0 0 22 8" style={{ marginLeft: 127 }}><path d="M11 0L22 8H0Z" fill="#777" /></svg>
            <Row $h={50} $pl={68} $mt={7}><T w={142} size={41} c="#d92b2b" dy={1}>3634.20</T></Row>
            <Row $h={50} $pl={41}><T w={71} size={35.5} c={GREY}>上证</T><T w={101} size={38} c="#d92b2b" ml={51} dy={1}>0.01%</T></Row>
          </IndexBlock>
          <NavItem>
            <NavIcon>
              <svg width="70" height="65" viewBox="60 36 210 196"><g fill="none" stroke="#666" strokeWidth="8">
                <path d="M98 63Q100 46 116 46H235Q268 48 263 82L252 190Q250 210 232 209" />
                <path d="M67 177L76 88Q77 78 88 78H220Q232 78 231 90L218 212Q217 223 206 223H94Q130 200 152 172L166 183Q182 190 183 172V124Q184 110 170 112L116 120Q104 124 108 132L126 146Q100 165 67 177Z" />
              </g></svg>
            </NavIcon>
            <T w={107} size={35.5} c={GREY} dy={10}>买板块</T>
          </NavItem>
          <NavItem>
            <NavIcon>
              <svg width="57" height="57" viewBox="686 46 170 170">
                <path d="M804 55H712Q694 55 694 72V192Q694 208 712 208H830Q848 208 848 192V98" fill="none" stroke="#666" strokeWidth="8" />
                <path d="M816 77L830 91L768 150L745 159L752 139Z" fill="#666" />
                <path d="M831 72L843 60" stroke="#666" strokeWidth="17" strokeLinecap="round" />
              </svg>
            </NavIcon>
            <T w={71} size={35.5} c={GREY} dy={10}>发帖</T>
          </NavItem>
          <NavItem>
            <NavIcon>
              <svg width="54" height="54" viewBox="1294 50 162 162"><g fill="none" stroke="#666" strokeWidth="7">
                <rect x="1300" y="59" width="67" height="65" rx="8" /><rect x="1300" y="141" width="67" height="65" rx="8" /><rect x="1381" y="141" width="67" height="65" rx="8" />
                <rect x="1388" y="65" width="53" height="53" rx="7" transform="rotate(45 1414.5 91.5)" />
              </g></svg>
            </NavIcon>
            <T w={71} size={35.5} c={GREY} dy={10}>功能</T>
          </NavItem>
          <NavItem>
            <NavIcon>
              <svg width="58" height="58" viewBox="0 0 58 58"><circle cx="29" cy="29" r="26.5" fill="none" stroke={ORANGE} strokeWidth="2.8" /><path d="M29 15.5V42.5M15.5 29H42.5" stroke={ORANGE} strokeWidth="2.8" /></svg>
            </NavIcon>
            <T w={107} size={35.5} c={ORANGE} dy={10}>加自选</T>
          </NavItem>
        </BottomBar>
      </Page>
    </>
  );
}
